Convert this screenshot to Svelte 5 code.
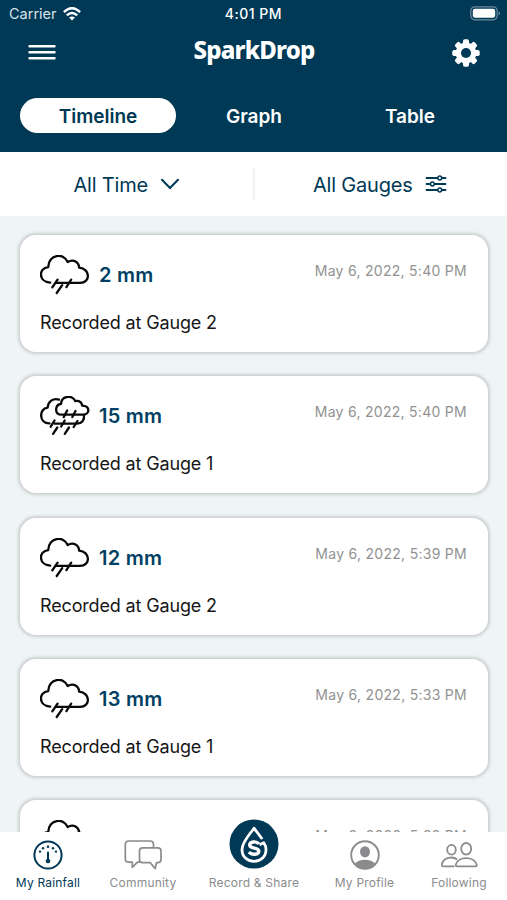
<script>
  let tabs = ['Timeline', 'Graph', 'Table'];
  let activeTab = $state('Timeline');

  let records = [
    { amount: 2, gauge: 'Gauge 2', date: 'May 6, 2022, 5:40 PM' },
    { amount: 15, gauge: 'Gauge 1', date: 'May 6, 2022, 5:40 PM', heavy: true },
    { amount: 12, gauge: 'Gauge 2', date: 'May 6, 2022, 5:39 PM' },
    { amount: 13, gauge: 'Gauge 1', date: 'May 6, 2022, 5:33 PM' },
    { amount: 8, gauge: 'Gauge 1', date: 'May 3, 2022, 5:32 PM' },
  ];
</script>

<div class="app">
  <header>
    <div class="status">
      <span class="carrier">
        <span class="carrier-name">Carrier</span>
        <svg width="18" height="14" viewBox="0 0 18 14">
          <g fill="none" stroke="#fff" stroke-width="2.5">
            <path d="M.9 5.1Q9-2.5 17.1 5.1" />
            <path d="M3.8 8.4q5.2-4.7 10.4 0" />
          </g>
          <path d="M6.1 10.6q2.9-2.4 5.8 0L9 13.6z" fill="#fff" />
        </svg>
      </span>
      <span class="time">4:01 PM</span>
      <svg class="battery" width="31" height="15" viewBox="0 0 31 15">
        <rect x=".8" y=".8" width="26.4" height="13" rx="4" fill="none" stroke="#6d8a9e" stroke-width="1.2" />
        <rect x="2.8" y="2.8" width="22.4" height="9" rx="2.2" fill="#fff" />
        <path d="M28.7 5.2q2.8 2.1 0 4.2z" fill="#6d8a9e" />
      </svg>
    </div>

    <div class="title-row">
      <button aria-label="Menu">
        <svg width="28" height="18" viewBox="0 0 28 18">
          <path d="M1.5 2.2h25M1.5 8.2h25M1.5 14.2h25" stroke="#fff" stroke-width="2.4" stroke-linecap="round" />
        </svg>
      </button>
      <h1>SparkDrop</h1>
      <button aria-label="Settings">
        <svg width="28" height="28" viewBox="-14 -14 28 28">
          <g fill="#fff">
            {#each [0, 45, 90, 135] as angle (angle)}
              <rect x="-3" y="-13.7" width="6" height="27.4" rx="1.8" transform="rotate({angle})" />
            {/each}
          </g>
          <circle r="7.7" fill="none" stroke="#fff" stroke-width="5.4" />
          <circle r="5" fill="#003956" />
        </svg>
      </button>
    </div>

    <nav class="tabs">
      {#each tabs as tab (tab)}
        <button class:active={tab === activeTab} onclick={() => (activeTab = tab)}>
          <span>{tab}</span>
        </button>
      {/each}
    </nav>
  </header>

  <div class="filters">
    <button class="filter">
      <span>All Time</span>
      <svg width="20" height="12" viewBox="0 0 20 12">
        <path d="M2 1.8l8 8.2 8-8.2" fill="none" stroke="#003956" stroke-width="2" stroke-linecap="round" />
      </svg>
    </button>
    <button class="filter gauges">
      <span>All Gauges</span>
      <svg width="22" height="18" viewBox="0 0 22 18" stroke="#003956" stroke-width="1.8" stroke-linecap="round">
        <path d="M1.5 3h19M1.5 9h19M1.5 15h19" />
        <g fill="#fff" stroke-width="1.5">
          <circle cx="14.8" cy="3" r="1.9" />
          <circle cx="7.4" cy="9" r="1.9" />
          <circle cx="14.8" cy="15" r="1.9" />
        </g>
      </svg>
    </button>
  </div>

  <main>
    {#each records as record, i (i)}
      <article>
        <div class="top">
          <svg class="cloud" width="50" height="40" viewBox="0 0 50 40">
            {#if record.heavy}
              <path d="M20 18.6C14.5 17.5 15 8.5 21 8C21.5-.8 33-1.3 35.2 5.2C39.5 4 42 7 42.2 9.6C50.3 9.6 50.1 18.6 43.3 18.6H21.5" />
              <path d="M9.5 27.4C-1.3 27.6-1.3 12.5 7.6 11.7C8 5.5 13 1.8 19 3.6" />
              <path d="M14.5 27.6H37C42 27.6 44.5 24 44 19.5" />
              <path d="M27.2 14.5l-3.5 6.6M35.5 15l-3.2 6M14.5 24.5l-3.8 6.2M24.7 24.5l-3.5 6M37.5 25l-3.8 6M17.3 31.5l-4.2 6.4M29 31.5l-4.2 6.4" />
            {:else}
              <path d="M10.2 27.6C-1.8 27-1.7 12.8 8.2 12.1C8.5-.5 23.8-2.8 27.7 7.1C33.5 3.5 39 7.5 39.1 12.7C50.5 13.5 50.9 27.8 40 27.9H16" />
              <path d="M17.6 24.7l-5.3 7.6M22.2 30.2l-5.5 7.8M31.2 24.7l-4.8 7.4" />
            {/if}
          </svg>
          <strong>{record.amount} mm</strong>
          <time>{record.date}</time>
        </div>
        <p>Recorded at {record.gauge}</p>
      </article>
    {/each}
  </main>

  <nav class="bottom">
    <a href="#rainfall" class="current">
      <svg width="30" height="30" viewBox="-15 -15 30 30">
        <circle r="13.6" fill="none" stroke="currentColor" stroke-width="2" />
        <g fill="currentColor">
          <circle cx="-8" cy="-3.4" r="1.2" />
          <circle cx="-5" cy="-6.8" r="1.2" />
          <circle cx="0" cy="-8.3" r="1.3" />
          <circle cx="5" cy="-6.8" r="1.2" />
          <circle cx="8" cy="-3.4" r="1.2" />
          <circle cy="6" r="2.3" />
          <path d="M-1-3.3h2V5h-2z" />
        </g>
      </svg>
      <span>My Rainfall</span>
    </a>
    <a href="#community">
      <svg width="38" height="30" viewBox="0 0 38 30" fill="none" stroke="currentColor" stroke-width="1.7" stroke-linejoin="round">
        <path d="M29.5 7.3V4.5Q29.5 1 26 1H4.8Q1.3 1 1.3 4.5V18.7Q1.3 22.2 4.8 22.2H8.3V27.3L13.5 22.2H16" />
        <path d="M18.7 7.8H33.8Q37 7.8 37 11V19.5Q37 22.7 33.8 22.7H32.5L31.2 28.6L26.3 22.7H18.7Q15.5 22.7 15.5 19.5V11Q15.5 7.8 18.7 7.8Z" />
      </svg>
      <span>Community</span>
    </a>
    <a href="#record" class="record">
      <svg width="50" height="50" viewBox="-25 -25 50 50">
        <circle r="24.5" fill="#003956" />
        <g fill="none" stroke="#fff">
          <path d="M8.2-5L0-15.8C-5-8.8-12-1.8-12 5.5C-12 12.6-7 17.3 0 17.3C7 17.3 12 12.6 12 5.5Q12 1.8 9.8-1.2L5.5.8" stroke-width="2.8" stroke-linejoin="round" />
          <path d="M4.8-.1C2.5-3-4.3-2.8-4.3 1C-4.3 5.4 4.8 3 4.8 7.3C4.8 11-2.4 11.3-5 8" stroke-width="3.4" />
        </g>
      </svg>
      <span>Record &amp; Share</span>
    </a>
    <a href="#profile">
      <svg width="30" height="30" viewBox="-15 -15 30 30">
        <circle r="13.8" fill="none" stroke="currentColor" stroke-width="1.9" />
        <ellipse cy="-3.2" rx="5" ry="5.6" fill="currentColor" />
        <path d="M-10 8.6C-6.5 3.5 6.5 3.5 10 8.6Q6 13.8 0 13.8T-10 8.6z" fill="currentColor" />
      </svg>
      <span>My Profile</span>
    </a>
    <a href="#following">
      <svg width="38" height="30" viewBox="0 0 38 30" fill="none" stroke="currentColor" stroke-width="1.8">
        <ellipse cx="11.5" cy="9.8" rx="4.3" ry="4.9" />
        <ellipse cx="26.2" cy="8.8" rx="5" ry="5.8" />
        <path d="M14.5 26.3H3.2Q1.5 26.3 1.9 24.4C3.3 17 13 16 17 19.5" />
        <path d="M17.3 26.3Q15.4 26.3 15.8 24.4C18 16 34.3 16 36.7 24.4Q37.1 26.3 35.2 26.3Z" />
      </svg>
      <span>Following</span>
    </a>
  </nav>
</div>

<style>
  :global(body) {
    overflow: hidden;
  }
  .app {
    display: flex;
    flex-direction: column;
    height: 900px;
    background: #eff4f5;
    color: #161616;
    font-family: Inter, 'Liberation Sans', sans-serif;
  }
  button {
    display: flex;
    align-items: center;
    justify-content: center;
    padding: 0;
    border: 0;
    background: none;
    color: inherit;
    font: inherit;
    letter-spacing: inherit;
  }
  svg {
    display: block;
    flex: none;
  }
  header {
    height: 152px;
    flex: none;
    box-sizing: border-box;
    background: #003956;
    color: #fff;
  }
  .status {
    display: grid;
    grid-template-columns: 1fr auto 1fr;
    align-items: center;
    height: 27px;
    padding: 0 6px 0 9px;
    font-size: 14px;
  }
  .carrier {
    display: flex;
    gap: 6px;
    align-items: center;
    color: #d8e2e8;
  }
  .carrier-name {
    font-size: 14.5px;
  }
  .time {
    margin-right: 3px;
    font-weight: 500;
    letter-spacing: 0.5px;
  }
  .battery {
    justify-self: end;
  }
  .title-row {
    display: flex;
    align-items: center;
    justify-content: space-between;
    height: 51px;
    padding: 0 27px 0 28px;
  }
  h1 {
    margin: 0 0 6px;
    font: 800 24px 'Noto Sans', sans-serif;
    letter-spacing: -0.8px;
  }
  .tabs {
    display: grid;
    grid-template-columns: repeat(3, 156px);
    padding: 20px 20px 0;
    font-size: 19px;
    font-weight: 600;
  }
  .tabs button {
    height: 35px;
    border-radius: 18px;
  }
  .tabs span {
    padding-top: 1px;
  }
  .tabs .active {
    background: #fff;
    color: #003956;
  }
  .filters {
    display: grid;
    grid-template-columns: 1fr 1fr;
    align-items: center;
    height: 64px;
    flex: none;
    background: #fff;
    color: #003956;
    font-size: 20px;
    letter-spacing: -0.2px;
  }
  .filter {
    height: 34px;
    gap: 12px;
  }
  .filter span {
    padding-top: 1px;
  }
  .gauges {
    margin-left: -1px;
    padding-right: 2px;
    border-left: 2px solid #f1f3f4;
  }
  main {
    flex: 1;
    min-height: 0;
    overflow: hidden;
    display: flex;
    flex-direction: column;
    gap: 24.3px;
    padding: 19px 19px 0 20px;
  }
  article {
    flex: none;
    height: 117px;
    box-sizing: border-box;
    padding: 20px 21px 0 20px;
    border-radius: 16px;
    background: #fff;
    box-shadow: 0 0 3px 1.5px #cdd0d2;
  }
  .top {
    display: flex;
    align-items: flex-start;
  }
  .cloud {
    fill: none;
    stroke: #080808;
    stroke-width: 2.3;
    stroke-linecap: round;
    stroke-linejoin: round;
  }
  strong {
    margin: 7px 0 0 9px;
    color: #003f63;
    font-size: 20px;
    font-weight: 600;
    letter-spacing: 0.25px;
    line-height: 26px;
  }
  time {
    margin: 6px 0 0 auto;
    color: #929292;
    font-size: 14px;
    letter-spacing: 0.28px;
    line-height: 20px;
  }
  p {
    margin: 16px 0 0;
    font-size: 18px;
    letter-spacing: -0.15px;
    line-height: 24px;
  }
  .bottom {
    position: relative;
    display: grid;
    grid-template-columns: 96px 94px 128px 93px 96px;
    height: 68px;
    flex: none;
    background: #fff;
    color: #8b8b8d;
    font-size: 12px;
    letter-spacing: 0.2px;
  }
  .bottom a {
    display: flex;
    flex-direction: column;
    align-items: center;
    gap: 5px;
    padding-top: 8px;
    color: inherit;
    line-height: 16px;
    text-decoration: none;
    white-space: nowrap;
  }
  .bottom .record {
    margin-top: -13px;
    padding-top: 0;
    gap: 6px;
  }
  .bottom .current {
    color: #003956;
  }
</style>
